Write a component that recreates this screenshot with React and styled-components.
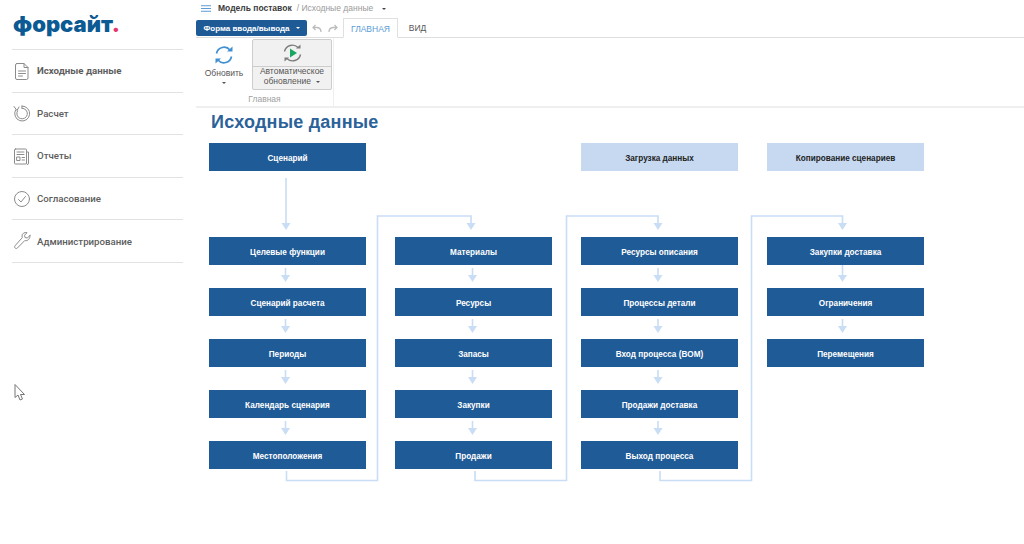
import React from "react";
import styled, { createGlobalStyle } from "styled-components";

const Global = createGlobalStyle`
  html, body { margin: 0; padding: 0; background: #fff; }
  body { font-family: "Liberation Sans", Arial, sans-serif; width: 1024px; height: 544px; overflow: hidden; }
`;
const Page = styled.div`display: flex; width: 1024px; height: 544px; position: relative; overflow: hidden; background: #fff;`;
const Sidebar = styled.aside`width: 195px; flex: none; padding: 0 12px; box-sizing: border-box;`;
const Logo = styled.div`
  height: 49px; padding: 9px 0 0 1px; box-sizing: border-box; font-family: Inter, sans-serif; font-weight: 900;
  font-size: 22px; line-height: 30px; letter-spacing: 0; color: #0b5a93; white-space: nowrap;
  span { color: #e8336d; }
`;
const Nav = styled.nav`width: 171px; border-top: 1px solid #e2e2e2;`;
const NavItem = styled.div`
  height: 42.6px; box-sizing: border-box; border-bottom: 1px solid #e2e2e2; display: flex; align-items: center; gap: 6px; padding: 0 0 0 1px;
  font-family: Roboto, sans-serif; font-size: 9.7px; font-weight: ${p => (p.$active ? 700 : 500)}; color: #5d5d5d;
  svg { flex: none; width: 18px; height: 20px; }
`;
const Main = styled.main`flex: 1; min-width: 0; display: flex; flex-direction: column;`;
const Crumbs = styled.div`
  height: 17px; padding: 3px 0 0 6px; box-sizing: border-box; display: flex; align-items: flex-start; font-size: 8.5px; line-height: 10px; color: #9a9a9a; white-space: nowrap;
`;
const Burger = styled.svg`width: 10px; height: 7px; margin: 2px 7px 0 0;`;
const CrumbStrong = styled.b`color: #3b3b3b; margin-right: 5px;`;
const Caret = styled.i`
  display: inline-block; width: 0; height: 0; border: 2px solid transparent; border-top: 2.5px solid ${p => p.$c || "#555"}; border-bottom: 0;
  margin: ${p => p.$m || "0"};
`;
const ToolRow = styled.div`height: 21px; margin-left: 1px; display: flex; align-items: flex-end; border-bottom: 1px solid #dedede; box-sizing: border-box;`;
const FormButton = styled.div`
  width: 111px; height: 16px; margin-bottom: 1px; background: #1d5a96; color: #fff; border-radius: 2px; font-size: 8px; font-weight: 700;
  display: flex; align-items: center; justify-content: center; white-space: nowrap;
`;
const Undo = styled.div`width: 36px; height: 16px; margin-bottom: 1px; display: flex; align-items: center; justify-content: center; gap: 6px; svg { width: 10px; height: 9px; }`;
const Tab = styled.div`
  height: ${p => (p.$active ? 20 : 19)}px; box-sizing: border-box; margin-bottom: ${p => (p.$active ? -1 : 0)}px; font-size: 8.5px; display: flex; align-items: center; justify-content: center; padding-top: 1px;
  width: ${p => p.$w}px; color: ${p => (p.$active ? "#5a9bd5" : "#555")};
  ${p => p.$active && "background: #fff; border: 1px solid #e0e0e0; border-bottom-color: #fff;"}
`;
const Ribbon = styled.div`height: 70px; margin-left: 1px; display: flex; box-sizing: border-box; border-bottom: 2px solid #efefef;`;
const RibbonGroup = styled.div`width: 137px; border-right: 1px solid #efefef; display: flex; flex-direction: column; align-items: center;`;
const RibbonButtons = styled.div`display: flex; padding: 1px 0 0 0; width: 100%; height: 53px;`;
const RefreshButton = styled.div`
  width: 56px; display: flex; flex-direction: column; align-items: center; font-size: 8.5px; color: #555; padding-top: 6px;
  svg { width: 20px; height: 20px; margin-bottom: 3px; }
`;
const AutoButton = styled.div`
  width: 80px; height: 51px; box-sizing: border-box; background: #f1f1f1; border: 1px solid #cdcdcd; border-radius: 2px; display: flex; flex-direction: column;
`;
const AutoIcon = styled.div`height: 26px; border-bottom: 1px solid #cdcdcd; display: flex; align-items: center; justify-content: center; svg { width: 21px; height: 20px; }`;
const AutoLabel = styled.div`flex: 1; text-align: center; font-size: 8.5px; line-height: 9.5px; color: #555; padding-top: 0;`;
const GroupLabel = styled.div`font-size: 8.5px; color: #a0a0a0; margin-top: 2px; padding-left: 0;`;
const Title = styled.h1`margin: 4px 0 0 16px; height: 31px; font-size: 18px; line-height: 20px; font-weight: 700; letter-spacing: 0.22px; color: #2b6299;`;
const Diagram = styled.div`
  position: relative; margin-left: 14px; width: 715px;
  display: grid; grid-template-columns: repeat(4, 157px); column-gap: 29px;
`;
const Head = styled.div`display: grid; grid-column: 1 / -1; grid-template-columns: subgrid; margin-bottom: 66px;`;
const Column = styled.div`display: flex; flex-direction: column; gap: 23px;`;
const Box = styled.div`
  height: 28px; box-sizing: border-box; display: flex; align-items: center; justify-content: center; padding-top: 2px;
  font-size: 8.2px; font-weight: 700; white-space: nowrap;
  background: ${p => (p.$light ? "#c6d9f1" : "#1f5b96")};
  color: ${p => (p.$light ? "#222" : "#fff")};
  ${p => p.$spot && `grid-column: ${p.$spot};`}
`;
const Wires = styled.svg`position: absolute; left: 0; top: 0; width: 800px; height: 360px; overflow: visible; pointer-events: none;`;
const Cursor = styled.svg`position: absolute; left: 13px; top: 383px; width: 13px; height: 19px;`;

const W = "#c9ddf5";
const Arrow = ({ x, y1, y2 }) => (
  <g>
    <path d={`M${x} ${y1}V${y2 - 6}`} stroke={W} strokeWidth="1.6" fill="none" />
    <path d={`M${x - 4.5} ${y2 - 7}H${x + 4.5}L${x} ${y2}Z`} fill={W} />
  </g>
);
const Link = ({ x1, xm, x2 }) => (
  <g>
    <path d={`M${x1} 328V337.5H${xm}V73H${x2}V82`} stroke={W} strokeWidth="1.6" fill="none" />
    <path d={`M${x2 - 4.5} 80H${x2 + 4.5}L${x2} 87Z`} fill={W} />
  </g>
);
const I = { fill: "none", stroke: "#8c8c8c", strokeWidth: 1, strokeLinecap: "round", strokeLinejoin: "round" };

const columns = [
  { x: 76.5, t: ["Целевые функции", "Сценарий расчета", "Периоды", "Календарь сценария", "Местоположения"] },
  { x: 263.5, t: ["Материалы", "Ресурсы", "Запасы", "Закупки", "Продажи"] },
  { x: 449, t: ["Ресурсы описания", "Процессы детали", "Вход процесса (BOM)", "Продажи доставка", "Выход процесса"] },
  { x: 633.5, t: ["Закупки доставка", "Ограничения", "Перемещения"] },
];

export default function App() {
  return (
    <Page>
      <Global />
      <Sidebar>
        <Logo>форсайт<span>.</span></Logo>
        <Nav>
          <NavItem $active>
            <svg viewBox="0 0 18 20" {...I}><path d="M4 2.500h7l4 4v10.500a1.500 1.500 0 0 1-1.500 1.500h-9.500a1.500 1.500 0 0 1-1.500-1.500v-13a1.500 1.500 0 0 1 1.500-1.500zM11 2.500v4h4M5.500 10h7M5.500 12.500h7M5.500 15h4" /></svg>
            Исходные данные
          </NavItem>
          <NavItem>
            <svg viewBox="0 0 18 20" {...I}><path d="M9 3a7.500 7.500 0 1 1-6.500 4M9 5.200a5.300 5.300 0 1 1-4.500 2.600" /><path d="M1 3.500l3 4 2-3.500M9 3v2.200" /></svg>
            Расчет
          </NavItem>
          <NavItem>
            <svg viewBox="0 0 18 20" {...I}><path d="M2.500 3h10a1 1 0 0 1 1 1v13a1 1 0 0 1-1 1h-10a1 1 0 0 1-1-1v-13a1 1 0 0 1 1-1zM13.500 6h2v11a1 1 0 0 1-2 .8M4 6h7M4 8.500h7M4 11h3v3.500h-3zM9 11.500h2.500M9 14h2.500" /></svg>
            Отчеты
          </NavItem>
          <NavItem>
            <svg viewBox="0 0 18 20" {...I}><circle cx="9" cy="10" r="7.500" /><path d="M5.500 10.500l2.500 2.500 4.500-5.500" /></svg>
            Согласование
          </NavItem>
          <NavItem>
            <svg viewBox="0 0 18 20" {...I}><path d="M17 4.500l-2.800 2.500-2.200-.5-.5-2.200 2.500-2.600c-2.500-.8-5 .8-5 3.300 0 .6.100 1.100.3 1.600l-7.300 8.200c-1.300 1.500.7 3.600 2.300 2.300l7.500-7.600c2.800 1 5.500-1.800 5.200-5z" /></svg>
            Администрирование
          </NavItem>
        </Nav>
      </Sidebar>
      <Main>
        <Crumbs>
          <Burger viewBox="0 0 10 7"><path d="M0 .75h10M0 3.500h10M0 6.250h10" stroke="#5c9bd5" strokeWidth="1" /></Burger>
          <CrumbStrong>Модель поставок</CrumbStrong>
          / Исходные данные
          <Caret $m="5px 0 0 9px" $c="#444" />
        </Crumbs>
        <ToolRow>
          <FormButton>Форма ввода/вывода<Caret $c="#fff" $m="0 0 0 6px" /></FormButton>
          <Undo>
            <svg viewBox="0 0 10 9"><path d="M9 8c0-3-2-4.500-4.500-4.500H1.500M3.500 1L1 3.500 3.500 6" fill="none" stroke="#bdbdbd" strokeWidth="1.300" /></svg>
            <svg viewBox="0 0 10 9"><path d="M1 8c0-3 2-4.500 4.500-4.500h3M6.500 1L9 3.500 6.500 6" fill="none" stroke="#bdbdbd" strokeWidth="1.300" /></svg>
          </Undo>
          <Tab $active $w={55}>ГЛАВНАЯ</Tab>
          <Tab $w={39}>ВИД</Tab>
        </ToolRow>
        <Ribbon>
          <RibbonGroup>
            <RibbonButtons>
              <RefreshButton>
                <svg viewBox="0 0 20 20"><path d="M2.500 8.500A7.700 7.700 0 0 1 16 5M17.500 11.500A7.700 7.700 0 0 1 4 15" fill="none" stroke="#3f8fd2" strokeWidth="1.700" /><path d="M13 6.500h5.500V1.500zM7 13.500H1.500v5z" fill="#3f8fd2" /></svg>
                Обновить
                <Caret $m="4px 0 0 0" />
              </RefreshButton>
              <AutoButton>
                <AutoIcon>
                  <svg viewBox="0 0 21 20"><path d="M2.500 8.500A8 8 0 0 1 16 4.500M18.500 11.500A8 8 0 0 1 5 15.500" fill="none" stroke="#7c7c7c" strokeWidth="1.400" /><path d="M14 5.500h4.500V1.500zM7 14.500H2.500v4z" fill="#7c7c7c" /><path d="M8 5.500l7 4.500-7 4.500z" fill="#1aa561" /></svg>
                </AutoIcon>
                <AutoLabel>Автоматическое<br />обновление <Caret $m="0 0 1px 3px" /></AutoLabel>
              </AutoButton>
            </RibbonButtons>
            <GroupLabel>Главная</GroupLabel>
          </RibbonGroup>
        </Ribbon>
        <Title>Исходные данные</Title>
        <Diagram>
          <Head>
            <Box>Сценарий</Box>
            <Box $light $spot={3}>Загрузка данных</Box>
            <Box $light $spot={4}>Копирование сценариев</Box>
          </Head>
          {columns.map(c => (
            <Column key={c.x}>{c.t.map(t => <Box key={t}>{t}</Box>)}</Column>
          ))}
          <Wires viewBox="0 0 800 360">
            <Arrow x={77} y1={35} y2={87} />
            {columns.map(c => c.t.slice(1).map((t, i) => (
              <Arrow key={t} x={c.x} y1={c.t.length === 3 && i === 0 ? 122 : 125 + i * 51} y2={139 + i * 51} />
            )))}
            <Link x1={77.500} xm={168.500} x2={262} />
            <Link x1={266} xm={357.500} x2={449} />
            <Link x1={451} xm={542.500} x2={633.500} />
          </Wires>
        </Diagram>
      </Main>
      <Cursor viewBox="0 0 13 19"><path d="M2 1.500v13l3-2.500 2 5 2.500-1-2-4.500h4z" fill="#fff" stroke="#777" strokeWidth="1" /></Cursor>
    </Page>
  );
}
